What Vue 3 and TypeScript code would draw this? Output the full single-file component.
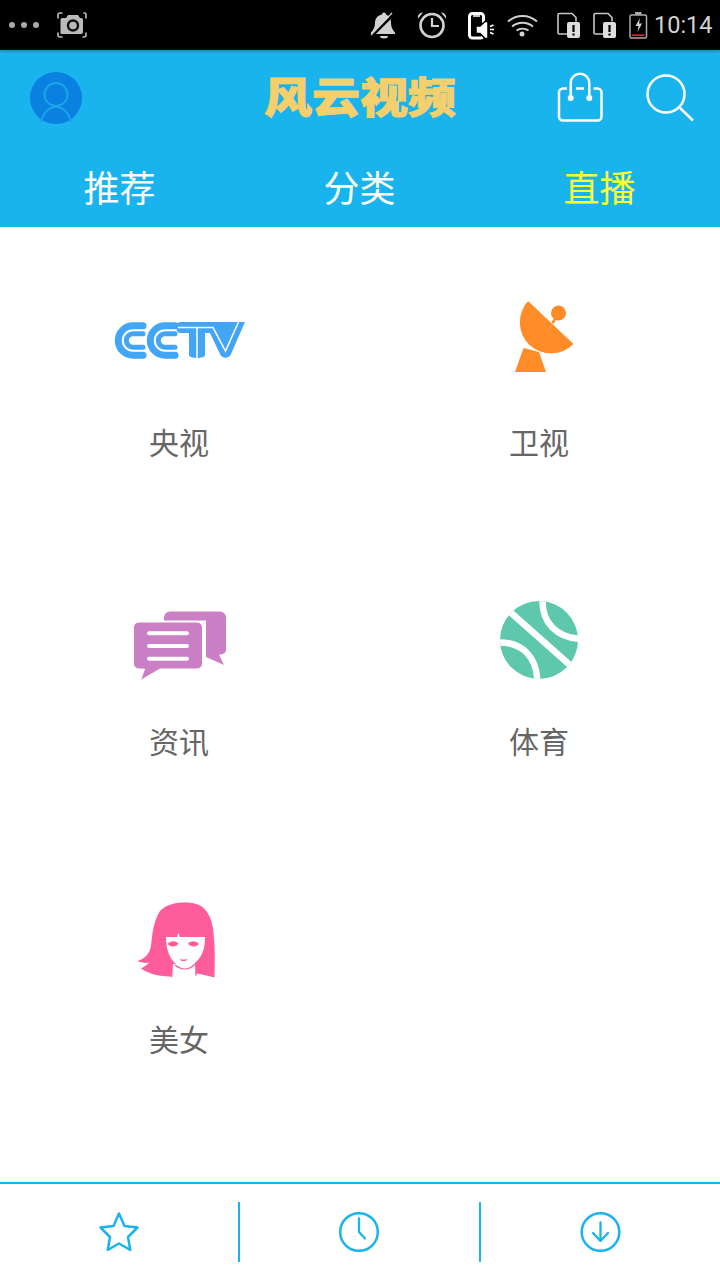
<script setup lang="ts">
const tabs = [
  { name: '推荐', active: false },
  { name: '分类', active: false },
  { name: '直播', active: true },
]
</script>

<template>
  <div class="page">
    <!-- 状态栏 -->
    <div class="status">
      <svg class="st-left" viewBox="0 0 100 50">
        <circle cx="12" cy="25" r="3" fill="#aaa" />
        <circle cx="24" cy="25" r="3" fill="#aaa" />
        <circle cx="36" cy="25" r="3" fill="#aaa" />
        <path d="M62 18h4l2-3h10l2 3h1a2 2 0 0 1 2 2v12a2 2 0 0 1-2 2H62a1.500 1.500 0 0 1-1.500-2V20a2 2 0 0 1 1.500-2z" fill="#bbb" />
        <circle cx="73" cy="25.500" r="5" fill="none" stroke="#111" stroke-width="2.400" />
        <path d="M58 18v-3a2 2 0 0 1 2-2h2M84 13h1a2 2 0 0 1 1 2v3M86 33v2a2 2 0 0 1-2 2h-1M62 37h-2a2 2 0 0 1-2-2v-2" fill="none" stroke="#bbb" stroke-width="1.600" stroke-linecap="round" />
      </svg>
      <div class="st-right">
        <svg class="st-icons" viewBox="360 0 292 50">
          <!-- 静音铃 -->
          <path d="M384 12.500c1.500 0 2 1 2 2 4 1.500 5 5 5 8.500 0 4 1.500 7 4 9.500v1.500h-24v-1.500c2.500-2.500 4-5.500 4-9.500 0-4 2-7.500 7-8.500 0-1 .6-2 2-2z" fill="#d2d2d2" />
          <path d="M380 36h8a4 2.500 0 0 1-8 0z" fill="#d2d2d2" />
          <path d="M372 36l24-24" stroke="#000" stroke-width="2.500" />
          <path d="M371 35l21-22" stroke="#d2d2d2" stroke-width="1.200" />
          <!-- 闹钟 -->
          <circle cx="432" cy="25.500" r="11.500" fill="none" stroke="#d2d2d2" stroke-width="2.600" />
          <path d="M432 18v8h7" fill="none" stroke="#d2d2d2" stroke-width="2.200" />
          <path d="M418 18.500c-.8-3 1.500-6 5-6zM446 18.500c.8-3-1.500-6-5-6z" fill="#d2d2d2" />
          <!-- 手机音量 -->
          <rect x="469.500" y="13.500" width="14" height="24.500" rx="3" fill="none" stroke="#fff" stroke-width="3" />
          <path d="M473 16h7" stroke="#fff" stroke-width="1.500" />
          <path d="M476 26h4l5-4.500h3v17h-3l-5-5h-4z" fill="#fff" stroke="#000" stroke-width="1.500" />
          <path d="M490 26.500l3.500-1.500M490 29.500h4M490 32.500l3.500 1.500" stroke="#fff" stroke-width="1.700" />
          <!-- wifi -->
          <path d="M508 21.500c8.500-7.500 20.500-7.500 29 0M512 26.500c6-5 15-5 21 0M516.500 30.500c3.500-2.500 8.500-2.500 12 0" fill="none" stroke="#d2d2d2" stroke-width="2" />
          <circle cx="522" cy="34" r="2.500" fill="#d2d2d2" />
          <!-- SIM 1 -->
          <path d="M568 34h-8.500a1.500 1.500 0 0 1-1.500-1.500V15a1.500 1.500 0 0 1 1.500-1.500H572l4 4v4" fill="none" stroke="#c8c8c8" stroke-width="1.600" />
          <rect x="567" y="22" width="13" height="16" rx="2" fill="#dedede" />
          <path d="M573.500 25v7M573.500 33.500v2" stroke="#000" stroke-width="2.200" />
          <!-- SIM 2 -->
          <path d="M604 34h-8.500a1.500 1.500 0 0 1-1.500-1.500V15a1.500 1.500 0 0 1 1.500-1.500H608l4 4v4" fill="none" stroke="#c8c8c8" stroke-width="1.600" />
          <rect x="603" y="22" width="13" height="16" rx="2" fill="#dedede" />
          <path d="M609.500 25v7M609.500 33.500v2" stroke="#000" stroke-width="2.200" />
          <!-- 电池 -->
          <rect x="630" y="15" width="16.500" height="23" rx="1.500" fill="none" stroke="#aaa" stroke-width="1.500" />
          <rect x="635" y="12" width="6.500" height="3" fill="#aaa" />
          <path d="M640 18l-4.500 8h3l-1 6 4.500-8.500h-3z" fill="#d2d2d2" />
          <path d="M632 35.200h12.500" stroke="#e0312a" stroke-width="1.500" />
        </svg>
        <span class="time">10:14</span>
      </div>
    </div>

    <!-- 顶部导航 -->
    <header class="header">
      <div class="topbar">
        <svg class="tb-side" viewBox="0 50 240 100">
          <circle cx="56" cy="98" r="26" fill="#0a80e0" />
          <circle cx="56" cy="94.500" r="11.500" fill="none" stroke="#1ca4e8" stroke-width="2" />
          <path d="M41 122c2-9 8-15 15-15s13 6 15 15" fill="none" stroke="#1ca4e8" stroke-width="2" />
        </svg>
        <div class="logo">风云视频</div>
        <svg class="tb-side" viewBox="480 50 240 100">
          <path d="M567 88.500h-4a4 4 0 0 0-4 4V116.500a4 4 0 0 0 4 4h34.500a4 4 0 0 0 4-4V92.500a4 4 0 0 0-4-4h-4M576 88.500h8" fill="none" stroke="#fff" stroke-width="2.500" />
          <path d="M570.700 98V83a9.300 9.300 0 0 1 18.600 0v15" fill="none" stroke="#fff" stroke-width="2.500" />
          <circle cx="570.700" cy="98" r="3" fill="#fff" />
          <circle cx="589.300" cy="98" r="3" fill="#fff" />
          <circle cx="666" cy="94" r="18.500" fill="none" stroke="#fff" stroke-width="2.500" />
          <path d="M680 108l13 12.500" stroke="#fff" stroke-width="2.500" />
        </svg>
      </div>
      <nav class="tabs">
        <span v-for="t in tabs" :key="t.name" class="tab" :class="{ active: t.active }">{{ t.name }}</span>
      </nav>
    </header>

    <!-- 直播分类 -->
    <main class="grid">
      <div class="cell">
        <svg class="icon" viewBox="100 290 160 100">
          <g fill="none" stroke="#42a5f5" stroke-linecap="round">
            <path d="M143 325.800h-10a14.700 14.700 0 0 0 0 29.400h10" stroke-width="7" />
            <path d="M143 333.800h-10a6.700 6.700 0 0 0 0 13.400h10" stroke-width="5" />
            <path d="M175 325.800h-10a14.700 14.700 0 0 0 0 29.400h10" stroke-width="7" />
            <path d="M175 333.800h-10a6.700 6.700 0 0 0 0 13.400h10" stroke-width="5" />
          </g>
          <path d="M180 322H245L231 354c-2 5-9 5-11 0L210 333h-5v22c0 4-16 4-16 0V333h-9c-5 0-5-11 0-11z" fill="#42a5f5" />
          <path d="M178 327.600H213L225.500 351 238.500 322M197 327.600V358" fill="none" stroke="#fff" stroke-width="1.500" />
        </svg>
        <span class="label">央视</span>
      </div>
      <div class="cell">
        <svg class="icon" viewBox="490 290 100 100">
          <path d="M523.500 348L515 372h31l-7-20z" fill="#ff8c26" />
          <path d="M552 324l6-10" stroke="#ff8c26" stroke-width="2.500" />
          <circle cx="558.500" cy="313" r="7.500" fill="#ff8c26" />
          <path d="M528 300.500A31 31 0 0 0 574 344z" fill="#ff8c26" stroke="#fff" stroke-width="1" />
        </svg>
        <span class="label">卫视</span>
      </div>
      <div class="cell">
        <svg class="icon" viewBox="120 588.500 120 100">
          <path d="M170 611h50a6 6 0 0 1 6 6v32a5 5 0 0 1-5 5h-2l5 10.500-18-8V620h-42v-3a6 6 0 0 1 6-6z" fill="#cb7fc5" />
          <path d="M139 621.500h58a5.500 5.500 0 0 1 5.500 5.500v36a5.500 5.500 0 0 1-5.500 5.500h-37l-19.500 11.500 4-11.500h-5.500a5.500 5.500 0 0 1-5.500-5.500v-36a5.500 5.500 0 0 1 5.500-5.500z" fill="#cb7fc5" stroke="#fff" stroke-width="1" />
          <path d="M149 632.800h38M149 645.500h38M149 658.300h38" stroke="#fff" stroke-width="4" stroke-linecap="round" />
        </svg>
        <span class="label">资讯</span>
      </div>
      <div class="cell">
        <svg class="icon" viewBox="490 588.500 100 100">
          <defs>
            <clipPath id="ball"><circle cx="539" cy="639.500" r="39" /></clipPath>
          </defs>
          <circle cx="539" cy="639.500" r="39" fill="#5ec8ac" />
          <g clip-path="url(#ball)" fill="none" stroke="#fff" stroke-width="6.500">
            <path d="M505 607l70 62" />
            <path d="M542.500 598c-1 24 14 40 40 40.500" />
            <path d="M497 642c24-1 40 13 40.500 40" />
          </g>
        </svg>
        <span class="label">体育</span>
      </div>
      <div class="cell">
        <svg class="icon" viewBox="130 887 100 100">
          <path d="M137.500 961c7-2 12-7 13.500-15 1-9 2-24 9-35 6-7 17-8.500 25-8.500 7 0 14 1 19 6 6 6 8.500 14 9.500 24 1.500 14 1.500 30 1 45-5-1-11-3-17-4l-3 4h-23l-.5-1c-7 0-15-1-20-3-4-1.500-7-3-10-5 3-1.500 6-4 8.500-6-4 1-8 0-12.500-1.500z" fill="#ff5c9b" />
          <path d="M173 964l22-2 .5 18h-23.500z" fill="#fff" />
          <path d="M175 965c3 2.500 6 3.800 10 3.800s7-1.500 10-4.800" fill="none" stroke="#ff5c9b" stroke-width="1.500" />
          <path d="M166 937h11l1.500-4 1.500 4h25c0 10-2 18-8 24-5 5-9 7.500-12 7.500s-7-2.500-11-6.500c-5-5-8-14-8-25z" fill="#fff" />
          <path d="M167.500 944c3-3.500 8-3.500 11-.5-2 3.500-8 4-11 .5zM188 943.500c3-3 8-3 11 .5-3 3.500-9 3-11-.5z" fill="#ff5c9b" />
          <path d="M179.500 959c2 .8 5 .8 8 0-1.500 3-6.500 3-8 0z" fill="#ff5c9b" />
        </svg>
        <span class="label">美女</span>
      </div>
    </main>

    <!-- 底部工具栏 -->
    <footer class="footer">
      <div class="fcell">
        <svg class="ficon" viewBox="95 1209 48 48">
          <path d="M119 1214.500l5.500 12.500 13 1.500-9.500 9.500 2.300 13-11.300-6.500-11.300 6.500 2.300-13-9.500-9.500 13-1.500z" fill="none" stroke="#1ab3ee" stroke-width="2.500" stroke-linejoin="round" />
        </svg>
      </div>
      <div class="fcell">
        <svg class="ficon" viewBox="336 1208 48 48">
          <circle cx="359" cy="1232" r="18.800" fill="none" stroke="#1ab3ee" stroke-width="2.500" />
          <path d="M359 1218.500v13.500l6 6.500" fill="none" stroke="#1ab3ee" stroke-width="2.300" stroke-linecap="round" />
        </svg>
      </div>
      <div class="fcell last">
        <svg class="ficon" viewBox="576.500 1208 48 48">
          <circle cx="600" cy="1232" r="18.800" fill="none" stroke="#1ab3ee" stroke-width="2.500" />
          <path d="M600 1222.500v18M592.500 1233l7.500 8 7.500-8" fill="none" stroke="#1ab3ee" stroke-width="2.300" stroke-linecap="round" stroke-linejoin="round" />
        </svg>
      </div>
    </footer>
  </div>
</template>

<style scoped>
.page {
  width: 720px;
  height: 1280px;
  display: flex;
  flex-direction: column;
  background: #fff;
  overflow: hidden;
  font-family: "Noto Sans CJK SC", "Noto Sans", sans-serif;
}

/* ===== 状态栏 ===== */
.status {
  height: 50px;
  flex: none;
  background: #000;
  display: flex;
  justify-content: space-between;
  align-items: center;
  padding-right: 8px;
  box-sizing: border-box;
  position: relative;
  box-shadow: 0 1px 3px rgba(0, 0, 0, 0.28);
}
.st-left {
  width: 100px;
  height: 50px;
}
.st-right {
  display: flex;
  align-items: center;
}
.st-icons {
  width: 292px;
  height: 50px;
}
.time {
  font-family: Roboto, sans-serif;
  font-size: 23.5px;
  color: #d2d2d2;
  margin-left: 2px;
  width: 58px;
}

/* ===== 顶部导航 ===== */
.header {
  height: 177px;
  flex: none;
  background: #19b3ee;
}
.topbar {
  height: 100px;
  display: grid;
  grid-template-columns: 240px 240px 240px;
  align-items: center;
}
.tb-side {
  width: 240px;
  height: 100px;
}
.logo {
  font-size: 48px;
  font-weight: 900;
  line-height: 48px;
  color: #f5cf6c;
  text-align: center;
  padding-bottom: 12px;
  -webkit-text-stroke: 1px #f5cf6c;
  transform: scaleY(0.88);
}
.tabs {
  height: 77px;
  display: grid;
  grid-template-columns: repeat(3, 1fr);
}
.tab {
  font-size: 36px;
  line-height: 72px;
  text-align: center;
  color: #fff;
  padding-right: 1px;
}
.tab.active {
  color: #ffff33;
}

/* ===== 分类网格 ===== */
.grid {
  height: 955px;
  flex: none;
  display: grid;
  grid-template-columns: 360px 360px;
  grid-auto-rows: 298.5px;
  padding-top: 63px;
  box-sizing: border-box;
}
.cell {
  display: flex;
  flex-direction: column;
  align-items: center;
}
.icon {
  height: 100px;
  width: auto;
}
.label {
  margin-top: 29px;
  margin-right: 2px;
  font-size: 30px;
  line-height: 44px;
  color: #666;
}

/* ===== 底部工具栏 ===== */
.footer {
  flex: 1;
  border-top: 2px solid #1ab3ee;
  display: grid;
  grid-template-columns: 240px 241px 1fr;
  padding-top: 18px;
  align-items: start;
}
.fcell {
  height: 60px;
  display: flex;
  align-items: center;
  justify-content: center;
  border-right: 2px solid #1ab3ee;
}
.fcell.last {
  border-right: none;
}
.ficon {
  width: 48px;
  height: 48px;
}
</style>
